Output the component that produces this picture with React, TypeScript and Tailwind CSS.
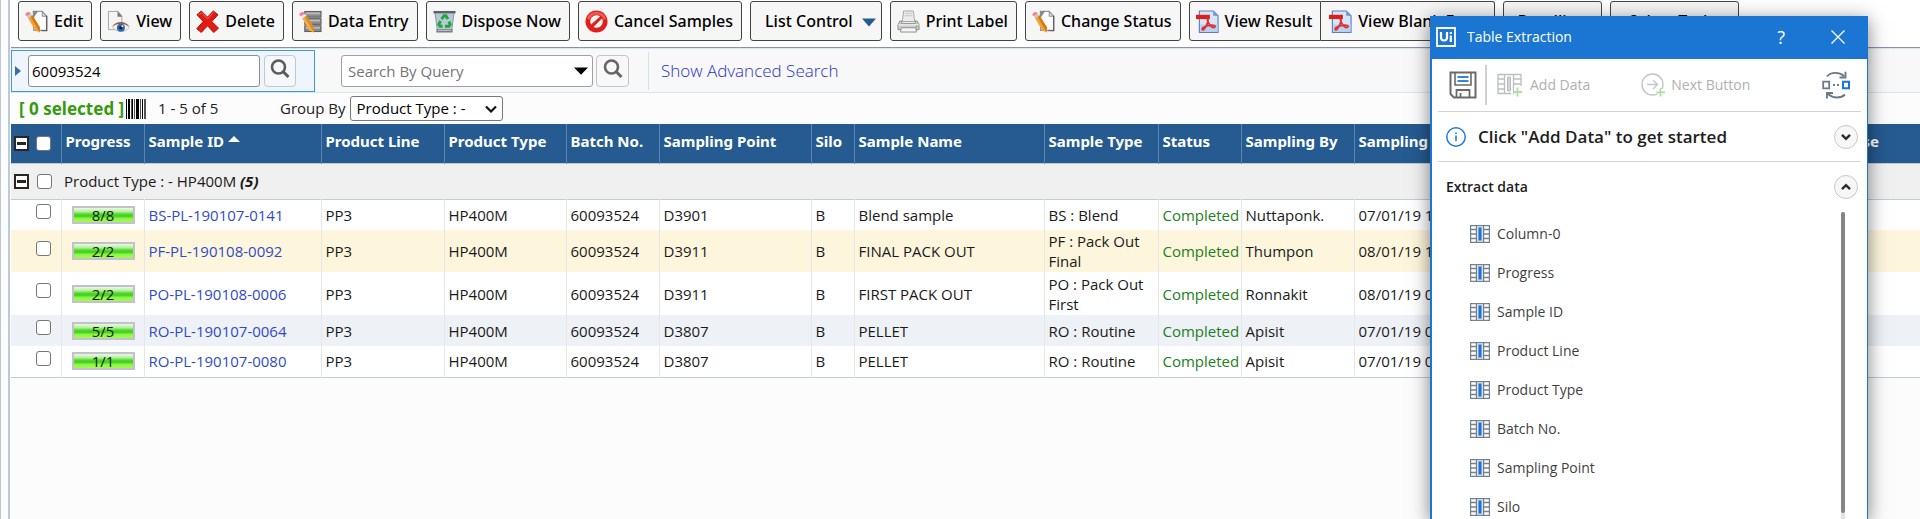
import React from "react";

type IconProps = { className?: string };

const iconBox = "h-[23px] w-[23px] shrink-0";

function EditIcon() {
  return (
    <svg viewBox="0 0 24 24" className={iconBox} aria-hidden="true">
      <path d="M9 1.500h9l4.500 5v14.800H9z" fill="#fdfdfd" stroke="#9a9a9a" strokeWidth="1.300" />
      <path d="M8 1h6L8.500 8.500z" fill="#8a8a8a" />
      <path d="M18 1.500v5h4.500z" fill="#ddd" stroke="#888" />
      <path d="M22.700 6v15.700H17" stroke="#555" strokeWidth="1.200" fill="none" />
      <path d="M3 8l4.500-2.800L15.500 18v5.500L10.500 21z" fill="#f6a136" />
      <path d="M5.500 6.500l2-1.300L15.500 18v5.500z" fill="#d07a16" />
      <path d="M2 6.500L6.200 3.800l1.500 2.200-4.400 2.800z" fill="#c5c8cf" />
      <path d="M.6 5.500C0 3.200 3 1 5.200 2.600l.9 1.100L1.900 6.600z" fill="#ee8095" />
    </svg>
  );
}

function ViewIcon() {
  return (
    <svg viewBox="0 0 24 24" className={iconBox} aria-hidden="true">
      <path d="M1.500 1.500H11.500l4 4.500v14.500H1.500z" fill="#f4f4f4" stroke="#a4a4a4" />
      <path d="M11 1v6h5z" fill="#777" />
      <path d="M6 18C9 13 19 12 23 18.500c-4 5.500-13.500 5-17-.5z" fill="#f3f6fa" stroke="#d3a98f" strokeWidth=".8" />
      <path d="M5 17.500c4-6 14-7 18.500 0-5-4-13-4.500-18.500 0z" fill="#a1583a" />
      <circle cx="14.500" cy="18.500" r="4.200" fill="#2a6cb5" />
      <circle cx="14.500" cy="18.500" r="1.900" fill="#0c1f3c" />
      <circle cx="16" cy="17" r="1" fill="#fff" />
    </svg>
  );
}

function DeleteIcon() {
  return (
    <svg viewBox="0 0 24 24" className={iconBox} aria-hidden="true">
      <path
        d="M1 5L5.500 1 12 7.500 18 1l5 4-6.500 7L23.500 19l-5 4.500L12 16.500 5.500 23.500.8 19.500 7.500 12z"
        fill="#e21b12"
        stroke="#b00d0a"
        strokeLinejoin="round"
      />
      <path d="M2.800 5l2.700-2.300L12 9.300 18 2.700" stroke="#f4685c" fill="none" />
    </svg>
  );
}

function DataEntryIcon() {
  return (
    <svg viewBox="0 0 24 24" className={iconBox} aria-hidden="true">
      {[1.5, 9, 16.5].map((y) => (
        <g key={y}>
          <rect x="6" y={y} width="17" height="6" fill="#8b8b8b" stroke="#5a5a5a" />
          <rect x="7" y={y + 1} width="15" height="2" fill="#b9b9b9" />
        </g>
      ))}
      <path d="M3 8l4.500-2.800L15.500 18v5.500L10.500 21z" fill="#f7ab48" />
      <path d="M5.500 6.500l2-1.300L15.500 18v5.500z" fill="#d98a2a" />
      <path d="M2 6.500L6.200 3.800l1.500 2.200-4.400 2.800z" fill="#ececef" />
      <path d="M.6 5.500C0 3.200 3 1 5.200 2.600l.9 1.100L1.900 6.600z" fill="#ee8095" />
    </svg>
  );
}

function DisposeIcon() {
  return (
    <svg viewBox="0 0 24 24" className={iconBox} aria-hidden="true">
      <path d="M2 2.500h20l-2.500 18.500h-15z" fill="#b9c9d8" stroke="#8294a5" />
      <path d="M.5 1h23v2.500H.5z" fill="#5d6266" />
      <path d="M3.500 20h17v3.500h-17z" fill="#7b7f83" />
      <path d="M5 20.800h14v1H5z" fill="#c7cacc" />
      <g fill="none" stroke="#1fa63c" strokeWidth="3">
        <path d="M9 9.500L11.500 6h2l2 3.500" />
        <path d="M16.500 12l1.500 3-1.500 2h-4" />
        <path d="M10 17H7.500L6 15l2-3.500" />
      </g>
    </svg>
  );
}

function CancelIcon() {
  return (
    <svg viewBox="0 0 24 24" className={iconBox} aria-hidden="true">
      <circle cx="12" cy="12" r="11.500" fill="#e2201b" />
      <path d="M2 9a10.500 10.500 0 0120 0c-5 3-14 3-20 0z" fill="#f0574f" />
      <circle cx="12" cy="12" r="7" fill="#f4f4f4" />
      <path d="M16.500 6l2 2L8 18.500 5.500 16z" fill="#e2201b" />
      <circle cx="12" cy="12" r="7" fill="none" stroke="#c81712" strokeWidth=".8" />
    </svg>
  );
}

function PrinterIcon() {
  return (
    <svg viewBox="0 0 24 24" className={iconBox} aria-hidden="true">
      <path d="M7 1h10l1.500 11h-13z" fill="#ececec" stroke="#a5a5a5" />
      <path d="M8.500 3.500h7M8 6h8" stroke="#c4c4c4" />
      <path d="M3 11.500h2.500L4.500 14h15l-1-2.500H21l2 4v5H1v-5z" fill="#cfcfcf" stroke="#8f8f8f" />
      <path d="M1.500 15.500h21" stroke="#f5f5f5" />
      <path d="M4.500 18.500h15l.8 4.500H3.700z" fill="#f6f6f6" stroke="#8c8c8c" />
      <circle cx="20.500" cy="17.200" r=".9" fill="#4cc04a" />
    </svg>
  );
}

function PdfIcon() {
  return (
    <svg viewBox="0 0 24 24" className={iconBox} aria-hidden="true">
      <path d="M3.500 1H18l5 5v17.300H3.500z" fill="#d5e5f8" stroke="#5d7fc0" strokeWidth="1.200" />
      <path d="M18 1v5h5z" fill="#6d93d6" />
      <path d="M4.500 15h18v7.500h-18z" fill="#b9d0f0" />
      <path d="M0 5h14.500v4.500H0z" fill="#d9201d" />
      <path
        d="M12.200 8.500c-1.200 0 .8 6.800 4.300 9.300 2.500 1.500 4.800-.8 2.500-1.600-3.500-1-9.500.5-11.800 2.300-2 2 .2 3.600 2 .6 2-3.400 4.500-8.200 3-10.600z"
        fill="none"
        stroke="#e0302b"
        strokeWidth="1.800"
      />
    </svg>
  );
}

function SearchIcon({ className }: IconProps) {
  return (
    <svg viewBox="0 0 20 20" className={className} aria-hidden="true">
      <circle cx="8.500" cy="8" r="6.500" fill="none" stroke="currentColor" strokeWidth="2.600" />
      <path d="M13 12.500l5.500 5.500" stroke="currentColor" strokeWidth="3" />
    </svg>
  );
}

function BarcodeIcon() {
  return (
    <svg viewBox="0 0 20 20" className="h-5 w-5 shrink-0" aria-hidden="true">
      <path d="M0 0h1v20H0zM2 0h2v20H2zM6 0h1v20H6zM10 0h3v20h-3zM16 0h1v20h-1z" fill="#000" />
      <path d="M5 0h1v20H5zM8 0h1v20H8zM14 0h1v20h-1zM18 0h2v20h-2z" fill="#555" />
    </svg>
  );
}

function ColumnIcon() {
  return (
    <svg viewBox="0 0 20 18" className="h-[18px] w-5 shrink-0" aria-hidden="true">
      <path
        d="M.5.500h19v17H.5zM6.500.500v17M13.500.500v17M.5 4.500h6M.5 9h6M.5 13.500h6M13.500 4.500h6M13.500 9h6M13.500 13.500h6"
        fill="none"
        stroke="#74828e"
        strokeWidth="1.400"
      />
      <path d="M7.500 1h5v16h-5z" fill="#cfd6dc" />
      <path d="M8.500 2.500h3v13h-3z" fill="#1a73e0" />
    </svg>
  );
}

function SaveIcon() {
  return (
    <svg viewBox="0 0 28 28" className="h-7 w-7" aria-hidden="true">
      <path d="M1.500 1.500h25v25H5l-3.500-3.500z" fill="#fff" stroke="#6a6a6a" strokeWidth="2" />
      <path d="M6 1.500V14h16V1.500" fill="none" stroke="#6a6a6a" strokeWidth="1.600" />
      <path d="M8.500 6h11M8.500 10h11" stroke="#2f86dc" strokeWidth="1.800" />
      <path d="M7.500 26.500V19h13v7.500M11.500 22v4.500" fill="none" stroke="#6a6a6a" strokeWidth="1.800" />
    </svg>
  );
}

function AddDataIcon() {
  return (
    <svg viewBox="0 0 25 24" className="h-6 w-[25px]" aria-hidden="true">
      <path
        d="M1 1.500h23M1 20.500h13M1 1v20M7.500 1v20M16.500 1v20M24 1v12M1 6h6.500M1 11h6.500M1 16h6.500M16.500 6H24M16.500 11H24"
        fill="none"
        stroke="#b9bec3"
        strokeWidth="1.300"
      />
      <path d="M10.500 4h3v14h-3z" fill="#d2d5d8" stroke="#b9bec3" />
      <path d="M17.500 14H25v10h-7.500z" fill="#fff" />
      <path d="M20.500 14.500v9M16 19h9" stroke="#b4dba4" strokeWidth="1.800" />
    </svg>
  );
}

function NextIcon() {
  return (
    <svg viewBox="0 0 24 24" className="h-6 w-6" aria-hidden="true">
      <circle cx="11.500" cy="11.500" r="10.500" fill="none" stroke="#c3c6c9" strokeWidth="1.400" />
      <path d="M6 11.500h10M12 7l4.500 4.500L12 16" fill="none" stroke="#c3c6c9" strokeWidth="1.400" />
      <path d="M16.500 16h7.500v8h-7.500z" fill="#fff" />
      <path d="M19.500 15v8.500M15.500 19.300h8.500" stroke="#b4dba4" strokeWidth="1.800" />
    </svg>
  );
}

function SwapIcon() {
  return (
    <svg viewBox="0 0 28 28" className="h-7 w-7" aria-hidden="true">
      <path d="M1.200 10.700h6v6.600h-6z" fill="none" stroke="#6b7a86" strokeWidth="1.800" />
      <path d="M21 10.700h6v6.600h-6z" fill="none" stroke="#1a73e0" strokeWidth="2" />
      <path d="M11 13h2v2h-2zM15 13h2v2h-2z" fill="#6b7a86" />
      <path d="M5 5.500C9 .8 17 .8 22 5M23.500.800V6.500h-6" fill="none" stroke="#6b7a86" strokeWidth="1.900" />
      <path d="M23 23.500c-4 4-12 4-17-.5M5 27.500V22h6" fill="none" stroke="#6b7a86" strokeWidth="1.900" />
    </svg>
  );
}

function Chevron({ up }: { up?: boolean }) {
  return (
    <svg viewBox="0 0 12 8" className="h-2 w-3" aria-hidden="true">
      <path d={up ? "M2 6.200L6 2.200l4 4" : "M2 1.800l4 4 4-4"} fill="none" stroke="#2b2b2b" strokeWidth="2.400" />
    </svg>
  );
}

const btn =
  "flex h-10 shrink-0 items-center border border-[#444] bg-[#f6f6f6] text-base font-medium whitespace-nowrap text-black";

function ToolButton({ icon, label }: { icon: React.ReactNode; label: string }) {
  return (
    <button type="button" className={`${btn} gap-1.5 rounded-[3px] pr-2 pl-1.5`}>
      {icon}
      {label}
    </button>
  );
}

function Toolbar() {
  return (
    <div className="flex gap-2 overflow-hidden border-b border-[#8d8fb0] bg-white pt-px pb-1.5 pl-[7px] font-['Noto_Sans',sans-serif]">
      <ToolButton icon={<EditIcon />} label="Edit" />
      <ToolButton icon={<ViewIcon />} label="View" />
      <ToolButton icon={<DeleteIcon />} label="Delete" />
      <ToolButton icon={<DataEntryIcon />} label="Data Entry" />
      <ToolButton icon={<DisposeIcon />} label="Dispose Now" />
      <ToolButton icon={<CancelIcon />} label="Cancel Samples" />
      <button type="button" className={`${btn} gap-2 rounded-[3px] pr-1 pl-3.5`}>
        List Control
        <svg viewBox="0 0 16 16" className="h-4 w-4" aria-hidden="true">
          <path d="M1 5.500h14l-7 8z" fill="#245b91" />
        </svg>
      </button>
      <ToolButton icon={<PrinterIcon />} label="Print Label" />
      <ToolButton icon={<EditIcon />} label="Change Status" />
      <div className="flex shrink-0">
        <button type="button" className={`${btn} gap-1.5 rounded-l-[3px] pr-2 pl-1.5`}>
          <PdfIcon />
          View Result
        </button>
        <button type="button" className={`${btn} gap-1.5 rounded-r-[3px] border-l-0 px-2`}>
          <PdfIcon />
          View Blank Form
        </button>
      </div>
      <button type="button" className={`${btn} rounded-[3px] px-3.5`}>
        Bundling
      </button>
      <button type="button" className={`${btn} rounded-[3px] px-[18px]`}>
        Select Tasks
      </button>
    </div>
  );
}

function SearchBar() {
  return (
    <div className="flex h-[45px] items-stretch border-t border-b border-[#d5e8f2] bg-[#f8f8f8] pt-px">
      <form className="flex w-[304px] items-center gap-1 border border-[#3d9bd5] bg-[#eff5fd] pl-[3px]">
        <svg viewBox="0 0 6 10" className="h-2.5 w-1.5" aria-hidden="true">
          <path d="M0 0l6 5-6 5z" fill="#3b6ea5" />
        </svg>
        <input
          aria-label="Search"
          defaultValue="60093524"
          className="ml-[3px] h-8 w-[232px] rounded-[3px] border border-[#8f8f8f] bg-white px-[3px] text-[15px] text-black"
        />
        <button type="button" aria-label="Run search" className="flex h-8 w-8 items-center justify-center rounded border border-[#c4c8ce] bg-[#f5f7fa] pb-1 text-[#5c5c5c]">
          <SearchIcon className="h-5 w-5" />
        </button>
      </form>
      <div className="ml-[26px] flex items-center gap-[3px]">
        <div className="flex h-8 w-[252px] items-center rounded-[3px] border border-[#a0a0a0] bg-white pr-1">
          <input aria-label="Search by query" placeholder="Search By Query" className="h-full min-w-0 flex-1 px-1.5 text-[15px] placeholder:text-[#757575]" />
          <button type="button" aria-label="Open query list">
            <svg viewBox="0 0 14 8" className="h-2 w-3.5" aria-hidden="true">
              <path d="M0 .5h14L7 7.800z" fill="#000" />
            </svg>
          </button>
        </div>
        <button type="button" aria-label="Run query" className="flex h-8 w-[33px] items-center justify-center rounded border border-[#c4c4c4] bg-[#f8f8f8] pb-1 text-[#666]">
          <SearchIcon className="h-5 w-5" />
        </button>
      </div>
      <div className="my-0.5 ml-[19px] flex items-center border-l border-[#cfe3ec] pl-3">
        <a href="#advanced" className="text-[17px] leading-6 font-light text-[#2433cf]">
          Show Advanced Search
        </a>
      </div>
    </div>
  );
}

function GroupBar() {
  return (
    <div className="flex h-[31px] items-center pl-2 text-[15px] text-[#222]">
      <span className="w-[107px] font-['Noto_Sans',sans-serif] text-[17px] leading-6 font-bold text-[#359a0c]">[ 0 selected ]</span>
      <BarcodeIcon />
      <span className="ml-3 w-[122px]">1 - 5 of 5</span>
      <label htmlFor="group-by">Group By</label>
      <span className="relative ml-1 flex items-center">
        <select id="group-by" className="h-[25px] w-[153px] appearance-none rounded-[3px] border border-[#767676] bg-white pl-1.5 text-[15px] text-black">
          <option>Product Type : -</option>
        </select>
        <svg viewBox="0 0 12 8" className="pointer-events-none absolute right-1.5 h-2 w-3" aria-hidden="true">
          <path d="M1 1.500l5 5 5-5" fill="none" stroke="#111" strokeWidth="2.200" />
        </svg>
      </span>
    </div>
  );
}

function Toggle() {
  return (
    <button type="button" aria-label="Collapse" className="flex h-[15px] w-[15px] items-center justify-center border-2 border-[#2b2522] bg-white">
      <span className="h-[3px] w-[9px] bg-[#2b2522]" />
    </button>
  );
}

function Check({ label }: { label: string }) {
  return (
    <input
      type="checkbox"
      aria-label={label}
      className="block h-[15px] w-[15px] appearance-none rounded-[3px] border border-[#767676] bg-white"
    />
  );
}

function Progress({ value }: { value: string }) {
  return (
    <div className="ml-[10px] h-[18px] w-[63px] border-2 border-[#c3c1cf] bg-[linear-gradient(#e9fbe2_0%,#b8f0a0_25%,#4fd82a_45%,#3fce22_58%,#8df545_75%,#a4fb50_100%)] text-center text-[15px] leading-[14px] text-[#1c1c1c]">
      {value}
    </div>
  );
}

const headers = [
  "Progress",
  "Sample ID",
  "Product Line",
  "Product Type",
  "Batch No.",
  "Sampling Point",
  "Silo",
  "Sample Name",
  "Sample Type",
  "Status",
  "Sampling By",
  "Sampling Date",
  "Response",
];

type Row = {
  progress: string;
  id: string;
  point: string;
  name: string;
  type: string;
  by: string;
  date: string;
  tone: string;
};

const rows: Row[] = [
  { progress: "8/8", id: "BS-PL-190107-0141", point: "D3901", name: "Blend sample", type: "BS : Blend", by: "Nuttaponk.", date: "07/01/19 10:00", tone: "h-[31px] bg-white" },
  { progress: "2/2", id: "PF-PL-190108-0092", point: "D3911", name: "FINAL PACK OUT", type: "PF : Pack Out Final", by: "Thumpon", date: "08/01/19 10:00", tone: "h-[42px] bg-[#fef6dc]" },
  { progress: "2/2", id: "PO-PL-190108-0006", point: "D3911", name: "FIRST PACK OUT", type: "PO : Pack Out First", by: "Ronnakit", date: "08/01/19 00:00", tone: "h-[43px] bg-white" },
  { progress: "5/5", id: "RO-PL-190107-0064", point: "D3807", name: "PELLET", type: "RO : Routine", by: "Apisit", date: "07/01/19 08:00", tone: "h-[31px] bg-[#eef1f6]" },
  { progress: "1/1", id: "RO-PL-190107-0080", point: "D3807", name: "PELLET", type: "RO : Routine", by: "Apisit", date: "07/01/19 04:00", tone: "h-[31px] bg-white" },
];

function SampleTable() {
  return (
    <table className="w-full table-fixed border-collapse text-left text-[15px] leading-5 text-[#1a1a1a]">
      <colgroup>
        <col className="w-[50px]" />
        <col className="w-[83px]" />
        <col className="w-[177px]" />
        <col className="w-[123px]" />
        <col className="w-[122px]" />
        <col className="w-[93px]" />
        <col className="w-[152px]" />
        <col className="w-[43px]" />
        <col className="w-[190px]" />
        <col className="w-[114px]" />
        <col className="w-[83px]" />
        <col className="w-[113px]" />
        <col className="w-[449px]" />
        <col />
      </colgroup>
      <thead>
        <tr className="h-[39px] bg-[#255b91] text-white">
          <th className="p-0">
            <div className="flex items-center gap-[7px] pl-[3px]">
              <Toggle />
              <Check label="Select all" />
            </div>
          </th>
          {headers.map((h) => (
            <th key={h} className="border-l border-[#5c86ae] p-0 pb-[5px] pl-1 font-['Noto_Sans',sans-serif] text-[15px] font-bold whitespace-nowrap">
              <span className="flex items-center gap-1">
                {h}
                {h === "Sample ID" && (
                  <svg viewBox="0 0 12 6" className="mb-1 h-1.5 w-3" aria-hidden="true">
                    <path d="M0 6l6-6 6 6z" fill="#fff" />
                  </svg>
                )}
              </span>
            </th>
          ))}
        </tr>
      </thead>
      <tbody>
        <tr className="h-9 border-y border-[#c2cbd2] bg-[#f0f0f0]">
          <td colSpan={14} className="p-0">
            <div className="flex items-center pl-[3px]">
              <Toggle />
              <span className="ml-2">
                <Check label="Select group" />
              </span>
              <span className="ml-3">
                Product Type : - HP400M{" "}
                <b className="italic">(5)</b>
              </span>
            </div>
          </td>
        </tr>
        {rows.map((r) => (
          <tr key={r.id} className={`${r.tone} last:border-b last:border-[#c2cbd2]`}>
            <td className="p-0 pb-1.5 pl-[25px]">
              <Check label={`Select ${r.id}`} />
            </td>
            <td className="border-l border-[#e4e6e8] p-0">
              <Progress value={r.progress} />
            </td>
            <td className="border-l border-[#e4e6e8] p-0 pl-1">
              <a href={`#${r.id}`} className="text-[#2f4bc9]">
                {r.id}
              </a>
            </td>
            <td className="border-l border-[#e4e6e8] p-0 pl-1">PP3</td>
            <td className="border-l border-[#e4e6e8] p-0 pl-1">HP400M</td>
            <td className="border-l border-[#e4e6e8] p-0 pl-1">60093524</td>
            <td className="border-l border-[#e4e6e8] p-0 pl-1">{r.point}</td>
            <td className="border-l border-[#e4e6e8] p-0 pl-1">B</td>
            <td className="border-l border-[#e4e6e8] p-0 pl-1">{r.name}</td>
            <td className="border-l border-[#e4e6e8] p-0 pl-1">{r.type}</td>
            <td className="border-l border-[#e4e6e8] p-0 pl-1 text-[#1b7f1b]">Completed</td>
            <td className="border-l border-[#e4e6e8] p-0 pl-1">{r.by}</td>
            <td className="border-l border-[#e4e6e8] p-0 pl-1">{r.date}</td>
            <td className="p-0" />
          </tr>
        ))}
      </tbody>
    </table>
  );
}

const extracted = ["Column-0", "Progress", "Sample ID", "Product Line", "Product Type", "Batch No.", "Sampling Point", "Silo"];

const roundBtn = "flex h-6 w-6 items-center justify-center rounded-full border border-[#c8c8c8] bg-[#f7f7f7]";

function ExtractionDialog() {
  return (
    <section
      role="dialog"
      aria-label="Table Extraction"
      className="absolute top-4 right-[52px] bottom-0 flex w-[438px] flex-col overflow-hidden border-r border-l-2 border-[#1a76d2] bg-white font-['Open_Sans',sans-serif] shadow-[0_4px_18px_rgba(0,0,0,0.5)]"
    >
      <header className="flex h-[43px] shrink-0 items-center bg-[#1a76d2] pr-[22px] pb-0.5 pl-1 text-white">
        <svg viewBox="0 0 20 20" className="h-5 w-5" aria-hidden="true">
          <path d="M1 1h18v18H1z" fill="none" stroke="#fff" strokeWidth="1.800" />
          <path d="M5 5v5.500a3 3 0 006 0V5M14.800 8.500V15" fill="none" stroke="#fff" strokeWidth="2.200" />
          <path d="M13.700 5h2.200v2h-2.200z" fill="#fff" />
        </svg>
        <h2 className="ml-[11px] text-sm">Table Extraction</h2>
        <button type="button" aria-label="Help" className="ml-auto text-lg">
          ?
        </button>
        <button type="button" aria-label="Close" className="ml-[46px]">
          <svg viewBox="0 0 14 14" className="h-3.5 w-3.5" aria-hidden="true">
            <path d="M.5.500l13 13M13.500.500l-13 13" stroke="#fff" strokeWidth="1.300" />
          </svg>
        </button>
      </header>
      <div className="flex flex-col px-1.5">
        <div className="flex h-[53px] items-center border-b border-[#d4d4d4] pr-[11px] pl-[11px] text-sm text-[#b0b0b0]">
          <button type="button" aria-label="Save">
            <SaveIcon />
          </button>
          <span className="ml-2 h-10 w-0.5 bg-[#cfcfcf]" />
          <button type="button" disabled className="ml-2.5 flex items-center gap-2">
            <AddDataIcon />
            Add Data
          </button>
          <button type="button" disabled className="ml-[51px] flex items-center gap-1.5">
            <NextIcon />
            Next Button
          </button>
          <button type="button" aria-label="Swap" className="ml-auto">
            <SwapIcon />
          </button>
        </div>
        <div className="flex h-[50px] items-center border-b border-[#d4d4d4] pr-[3px] pl-2">
          <svg viewBox="0 0 20 20" className="h-5 w-5" aria-hidden="true">
            <circle cx="10" cy="10" r="9.200" fill="none" stroke="#1f7ae0" strokeWidth="1.500" />
            <path d="M10 8.500V14M10 5.500V7" stroke="#1f7ae0" strokeWidth="1.600" />
          </svg>
          <strong className="ml-3 text-[17px] leading-6 font-semibold text-[#1d1d1d]">Click "Add Data" to get started</strong>
          <button type="button" aria-label="Expand help" className={`${roundBtn} ml-auto`}>
            <Chevron />
          </button>
        </div>
        <div className="flex h-[50px] items-center pr-[3px] pl-2">
          <h3 className="text-sm font-semibold text-[#1d1d1d]">Extract data</h3>
          <button type="button" aria-label="Collapse extract data" className={`${roundBtn} ml-auto`}>
            <Chevron up />
          </button>
        </div>
      </div>
      <div className="flex min-h-0 flex-1 overflow-hidden">
        <ul className="flex-1 pt-0.5 pl-[38px]">
          {extracted.map((name) => (
            <li key={name} className="flex h-[39px] items-center gap-[7px] text-sm text-[#3f3f3f]">
              <ColumnIcon />
              {name}
            </li>
          ))}
        </ul>
        <div className="mr-[22px] w-1 bg-[#e2e2e2]">
          <div className="h-[301px] rounded-full bg-[#858585]" />
        </div>
      </div>
    </section>
  );
}

export default function App() {
  return (
    <div className="relative min-h-screen overflow-hidden border-l border-[#bccad6] bg-[#fcfcfc] font-['Open_Sans',sans-serif]">
      <main className="ml-[7px] min-h-screen border-l-2 border-[#bccad6] pl-px">
        <Toolbar />
        <SearchBar />
        <GroupBar />
        <SampleTable />
      </main>
      <ExtractionDialog />
    </div>
  );
}
